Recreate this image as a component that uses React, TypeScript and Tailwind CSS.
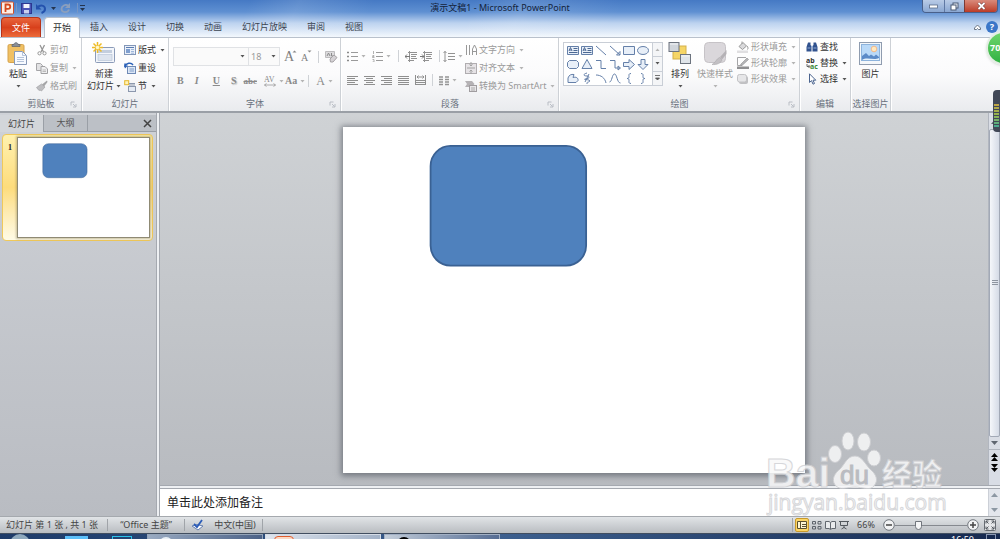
import { useState, type ReactNode } from "react";
import { clsx } from "clsx";

interface IconProps {
  w?: number;
  h?: number;
  children: ReactNode;
}

const Icon = ({ w = 12, h = 12, children }: IconProps) => (
  <svg
    width={w}
    height={h}
    viewBox={`0 0 ${w} ${h}`}
    fill="none"
    className="shrink-0"
    aria-hidden="true"
  >
    {children}
  </svg>
);

const Caret = ({ dim = false }: { dim?: boolean }) => (
  <Icon w={5} h={3}>
    <path d="M0.5 0H4.5L2.5 2.6Z" fill={dim ? "#b4b4b4" : "#555"} />
  </Icon>
);

const Divider = () => <span className="h-3 w-px shrink-0 bg-[#cfd2d6]" />;

// Ribbon building blocks
interface GroupProps {
  title: string;
  launcher?: boolean;
  className?: string;
  children: ReactNode;
}

const Group = ({ title, launcher, className, children }: GroupProps) => (
  <section
    className={clsx(
      "flex shrink-0 flex-col border-r border-[#cdd1d6] shadow-[1px_0_0_#fff]",
      className
    )}
  >
    <div className="flex h-[59px] items-start pt-1">{children}</div>
    <div className="flex h-[14px] items-center text-[#68707c]">
      <span className="flex-1 whitespace-nowrap text-center">{title}</span>
      {launcher && (
        <button aria-label={`${title}设置`} className="-ml-3 mr-1">
          <Icon w={7} h={7}>
            <path d="M1 4.500V1H4.500M3 3L5.500 5.500M6 3V6H3" stroke="#b3b8bf" strokeWidth=".9" />
          </Icon>
        </button>
      )}
    </div>
  </section>
);

interface SmallButtonProps {
  icon: ReactNode;
  label: string;
  arrow?: boolean;
  disabled?: boolean;
  tight?: boolean;
}

const SmallButton = ({ icon, label, arrow, disabled, tight }: SmallButtonProps) => (
  <button
    disabled={disabled}
    className={clsx(
      "flex items-center gap-0.5 whitespace-nowrap",
      tight ? "h-4" : "h-[18px]",
      disabled ? "text-[#9a9a9a]" : "text-[#333]"
    )}
  >
    {icon}
    <span>{label}</span>
    {arrow && (
      <span className="ml-0.5">
        <Caret dim={disabled} />
      </span>
    )}
  </button>
);

interface BigButtonProps {
  icon: ReactNode;
  label: string;
  second?: string;
  arrow?: boolean;
  disabled?: boolean;
  className?: string;
}

const BigButton = ({ icon, label, second, arrow, disabled, className }: BigButtonProps) => (
  <button
    disabled={disabled}
    className={clsx(
      "flex shrink-0 flex-col items-center whitespace-nowrap",
      disabled ? "text-[#9a9a9a]" : "text-[#333]",
      className
    )}
  >
    <span className="flex h-[26px] items-start">{icon}</span>
    <span>{label}</span>
    <span className="flex h-3 items-center gap-0.5">
      {second}
      {arrow && <Caret dim={disabled} />}
    </span>
  </button>
);

const IconButton = ({
  label,
  arrow,
  className,
  children,
}: {
  label: string;
  arrow?: boolean;
  className?: string;
  children: ReactNode;
}) => (
  <button
    aria-label={label}
    className={clsx("flex shrink-0 items-center gap-[3px] text-[#8a8a8a]", className)}
  >
    {children}
    {arrow && <Caret dim />}
  </button>
);

// Icons
const PasteIcon = () => (
  <Icon w={22} h={24}>
    <rect x="1" y="2.500" width="16" height="18" rx="1.500" fill="#f0c063" stroke="#d5a24c" />
    <path d="M5 4.500V2.500H7C7 0 11 0 11 2.500H13V4.500Z" fill="#8a8f98" stroke="#5d636d" strokeWidth=".7" />
    <path d="M7.500 9.500H15.500L19.500 13.500V22.500H7.500Z" fill="#f7faff" stroke="#8799b8" />
    <path d="M15.500 9.500V13.500H19.500M10 15.500H17M10 17.500H17M10 19.500H17" stroke="#b4c3da" />
  </Icon>
);

const CutIcon = () => (
  <Icon>
    <path d="M4 1L7.500 8M8.500 1L5 8" stroke="#969696" strokeWidth="1.300" />
    <circle cx="3.500" cy="9.300" r="1.600" stroke="#969696" />
    <circle cx="8.500" cy="9.300" r="1.600" stroke="#969696" />
  </Icon>
);

const CopyIcon = () => (
  <Icon>
    <path d="M.5 1.500H4.500L6.500 3.500V8.500H.5Z" fill="#e2e2e4" stroke="#a5a5a8" />
    <path d="M5 4.500H9L11.500 7V11.500H5Z" fill="#eeeef0" stroke="#a0a0a3" />
    <path d="M6.500 8H10M6.500 9.500H10" stroke="#bbb" />
  </Icon>
);

const BrushIcon = () => (
  <Icon>
    <path d="M11 .5L6 4.500L8 6.500L11.500 2Z" fill="#a5a5a7" />
    <path d="M5.500 4L9 7L5.500 11L4 10L3 10.500L.5 7.500Z" fill="#bdbdc0" stroke="#9a9a9d" strokeWidth=".6" />
  </Icon>
);

const NewSlideIcon = () => (
  <Icon w={24} h={24}>
    <rect x="3.500" y="5.500" width="19" height="15" rx="1" fill="#f3f6fb" stroke="#8b9bb8" />
    <rect x="6" y="8" width="14" height="3" fill="#c3cede" />
    <rect x="6" y="12.500" width="14" height="6" fill="#dde4ee" stroke="#b3c0d4" strokeWidth=".6" />
    <path d="M5.500 0V11M0 5.500H11M1.500 1.500L9.500 9.500M9.500 1.500L1.500 9.500" stroke="#eebb25" strokeWidth="1.500" />
    <circle cx="5.500" cy="5.500" r="1.800" fill="#fff7c8" />
  </Icon>
);

const LayoutIcon = () => (
  <Icon>
    <rect x=".5" y="1.500" width="11" height="9" fill="#eaf0f9" stroke="#8397b8" />
    <path d="M2 3.500H10" stroke="#5a7bb0" />
    <rect x="2" y="5" width="4" height="4" fill="#7f9fcf" />
    <path d="M7 5.500H10M7 7.500H10M7 9.200H10" stroke="#9db6da" />
  </Icon>
);

const ResetIcon = () => (
  <Icon>
    <rect x="3.500" y="4.500" width="8" height="7" fill="#dce7f6" stroke="#6f8ab5" />
    <path d="M5.500 7H10M5.500 9H10" stroke="#7f9cc8" />
    <path d="M1 5V1.500M1 4.500C2 1 7 0 9 3" stroke="#2c62b8" strokeWidth="1.500" />
    <path d="M0 3.500H4L1 6.500Z" fill="#2c62b8" />
  </Icon>
);

const SectionIcon = () => (
  <Icon>
    <rect x=".7" y=".7" width="4" height="4" fill="#fff3b8" stroke="#e6b72c" />
    <path d="M5 3.500H11M5 5H11" stroke="#8c98ad" />
    <rect x="4.500" y="6.500" width="7" height="5" fill="#e5ebf4" stroke="#8c98ad" />
  </Icon>
);

const BulletsIcon = ({ numbered = false }: { numbered?: boolean }) => (
  <Icon w={11} h={11}>
    <path d="M4 1.500H11M4 5.500H11M4 9.500H11" stroke="#9a9a9a" />
    {numbered ? (
      <path d="M1.500 0V3M.5 4.500H2V5.500H.5V6.500H2.500M.5 8.500H2V11H.5" stroke="#a0a0a0" strokeWidth=".8" />
    ) : (
      <path d="M0 1.500H2M0 5.500H2M0 9.500H2" stroke="#8a8a8a" strokeWidth="1.600" />
    )}
  </Icon>
);

const IndentIcon = ({ flip = false }: { flip?: boolean }) => (
  <Icon w={12} h={11}>
    <path d="M3 1.500H12M6 3.500H12M6 5.500H11M6 7.500H12M3 9.500H9M4.500 0V11" stroke="#929292" />
    <path
      d={flip ? "M0 5.500H4M2 3.500L4 5.500L2 7.500" : "M5 5.500H0M2 3.500L0 5.500L2 7.500"}
      stroke="#777"
    />
  </Icon>
);

const alignPaths: Record<string, string> = {
  左对齐: "M0 1.500H11M0 3.500H8M0 5.500H11M0 7.500H8M0 9.500H11",
  居中: "M0 1.500H11M2 3.500H9M0 5.500H11M2 7.500H9M0 9.500H11",
  右对齐: "M0 1.500H11M3 3.500H11M0 5.500H11M3 7.500H11M0 9.500H11",
  两端对齐: "M0 1.500H11M0 3.500H11M0 5.500H11M0 7.500H11M0 9.500H11",
  分散对齐: "M.5 0V4M10.500 0V4M2 2H9M0 5.500H11M0 7.500H11M0 9.500H11M3.500 .5L2 2L3.500 3.500M7.500 .5L9 2L7.500 3.500M.5 4V10M10.500 4V10",
};

const TextDirIcon = () => (
  <Icon>
    <path d="M1.500 1V11M4.500 1V11M7.500 11V5L9.500 1L11.500 5V11M7.500 7.500H11.500" stroke="#989898" />
  </Icon>
);

const AlignTextIcon = () => (
  <Icon>
    <rect x=".5" y="1.500" width="11" height="10" fill="#e6e3e6" stroke="#b0adb0" />
    <path d="M6 0V4M6 12V8M4.500 2.500L6 4L7.500 2.500M4.500 9.500L6 8L7.500 9.500M2 6H10" stroke="#a2a2a2" />
  </Icon>
);

const SmartArtIcon = () => (
  <Icon>
    <path d="M0 1H7L9.500 4L7 7H0L2 4Z" fill="#b5b2b5" />
    <rect x="4.500" y="5.500" width="7" height="6" fill="#e8e6e8" stroke="#a09da0" />
    <path d="M6 8H10M6 10H10" stroke="#aaa" />
  </Icon>
);

const ArrangeIcon = () => (
  <Icon w={24} h={23}>
    <rect x="5" y="4" width="13" height="13" fill="#f5d566" stroke="#d3b04a" />
    <rect x="1" y=".5" width="10" height="9" fill="#d0d5db" stroke="#6c737e" />
    <rect x="12.500" y="12.500" width="10" height="9" fill="#dfe4e9" stroke="#6c737e" />
    <path d="M2 2H10M13.500 14H21.500" stroke="#f4f6f8" />
  </Icon>
);

const QuickStyleIcon = () => (
  <Icon w={23} h={24}>
    <rect x=".5" y=".5" width="21" height="20" rx="4" fill="#dad7db" stroke="#c6c3c7" />
    <path d="M22.500 8L16 15L18 17.500L22.500 12Z" fill="#b5b2b6" />
    <path d="M15.500 15.500L18 18C17 21 13 23 8 22.500C12 20.500 12 17 15.500 15.500Z" fill="#c3c0c4" stroke="#aaa7ab" strokeWidth=".6" />
  </Icon>
);

const FillIcon = () => (
  <Icon>
    <path d="M2 5.500L6 1.500L9.500 5L5.500 8.500Z" fill="#d9d9db" stroke="#999" />
    <path d="M5 3V.5M10 5C11.500 6.500 11 8 10.500 8.500" stroke="#999" />
    <rect y="9.500" width="11" height="2.500" fill="#e0dfe1" />
  </Icon>
);

const OutlineIcon = () => (
  <Icon>
    <path d="M.5 .5H9M.5 .5V8.500H5" stroke="#a5a5a7" />
    <path d="M3.500 7.500L10 1L11.500 2.500L5 8.500Z" fill="#b5b5b8" stroke="#8d8d8f" strokeWidth=".6" />
    <rect y="9.500" width="12" height="2.500" fill="#8f8f91" />
  </Icon>
);

const EffectIcon = () => (
  <Icon>
    <rect x="2" y="3" width="9" height="8" rx="2" fill="#c0c0c3" />
    <rect x=".5" y="1.500" width="9" height="7.500" rx="2" fill="#e6e6e8" stroke="#c3c3c6" />
  </Icon>
);

const FindIcon = () => (
  <Icon>
    <path d="M2 1.500H4.500V4L5.500 5V10.500H.5V6ZM10 1.500H7.500V4L6.500 5V10.500H11.500V6Z" fill="#31528e" />
    <path d="M1.500 7H4.500M7.500 7H10.500M5 5.500H7" stroke="#8faad6" />
  </Icon>
);

const ReplaceIcon = () => (
  <Icon>
    <text x="0" y="5.500" fontSize="7" fontWeight="700" fill="#333">ab</text>
    <text x="4" y="11.500" fontSize="7" fontWeight="700" fill="#3b8a3b">ac</text>
    <path d="M1 7V9.500H3.500M2.500 8L4 9.500L2.500 11" stroke="#444" strokeWidth=".8" />
  </Icon>
);

const SelectIcon = () => (
  <Icon>
    <path d="M3.500 .8V9.500L5.500 7.600L7 11.200L8.500 10.500L7 7.200H9.800Z" fill="#fff" stroke="#4b648f" />
  </Icon>
);

const PictureIcon = () => (
  <Icon w={23} h={23}>
    <rect x=".5" y=".5" width="22" height="22" fill="#f4f7fa" stroke="#8f9caf" />
    <rect x="2.500" y="2.500" width="18" height="16" fill="#b9d9f8" stroke="#8db3dc" />
    <circle cx="15" cy="7" r="2.800" fill="#ffe9c0" stroke="#f2b98a" />
    <path d="M3 18V14L7 11L10 14L12 12.500L15 14.500L17 12.500L20 15V18Z" fill="#5c8bc8" />
    <path d="M3 18C8 14.500 15 19 20 16V18Z" fill="#e6f2fc" />
  </Icon>
);

// Shape gallery, in reading order
const shapes: { name: string; d: string; fill?: boolean; text?: boolean }[] = [
  { name: "文本框", d: "M1.500 3.500H12.500V11.500H1.500Z", fill: true, text: true },
  { name: "垂直文本框", d: "M1.500 3.500H12.500V11.500H1.500Z", fill: true, text: true },
  { name: "直线", d: "M2 3L12 12" },
  { name: "箭头", d: "M2 3L12 12M12 8.500V12H8.500Z" },
  { name: "矩形", d: "M1.500 3.500H12.500V11.500H1.500Z", fill: true },
  { name: "椭圆", d: "M1.500 7.500C1.500 2.200 12.500 2.200 12.500 7.500C12.500 12.800 1.500 12.800 1.500 7.500Z", fill: true },
  { name: "圆角矩形", d: "M3.500 3.500H10.500L12.500 5.500V9.500L10.500 11.500H3.500L1.500 9.500V5.500Z", fill: true },
  { name: "三角形", d: "M7 2.500L12 11.500H2Z", fill: true },
  { name: "肘形连接符", d: "M2 3.500H7V11.500H12" },
  { name: "肘形箭头", d: "M2 3.500H7V11H12M10 9L12.500 11L10 13Z" },
  { name: "右箭头", d: "M1.500 5.500H7V2.500L12.500 7.500L7 12.500V9.500H1.500Z", fill: true },
  { name: "下箭头", d: "M5 2.500H9V7.500H12L7 12.500L2 7.500H5Z", fill: true },
  { name: "任意多边形", d: "M2 11.500V7C3 4 5 3 8 3.500L7 6.500C10 5.500 12.500 7 12 9.500L10 11.500Z", fill: true },
  { name: "自由曲线", d: "M7 2C3 3 3 5 7 5C10 5 10 8 5 8C3 9 9 8 10 10C8 12 7 10 7 13M9 3L5 11" },
  { name: "弧形", d: "M2 4C7 4 11 7 12 12" },
  { name: "曲线", d: "M1.500 11C4 11 4 3 6.500 3C9 3 9 12 12.500 12" },
  { name: "左大括号", d: "M9 2.500C6.500 2.500 7 4 7 5.500C7 7 6.500 7.500 5 7.500C6.500 7.500 7 8 7 9.500C7 11 6.500 12.500 9 12.500" },
  { name: "右大括号", d: "M5 2.500C7.500 2.500 7 4 7 5.500C7 7 7.500 7.500 9 7.500C7.500 7.500 7 8 7 9.500C7 11 7.500 12.500 5 12.500" },
];

const TitleBar = () => (
  <header className="relative flex h-[17px] shrink-0 items-start justify-between">
    <div className="flex h-4 items-center gap-0.5 pl-px">
      <Icon w={13} h={14}>
        <rect x=".5" y="1" width="12" height="12" rx="1" fill="#fbeee6" stroke="#d1512a" />
        <path d="M4.500 11V3.500H7C10 3.500 10 7.800 7 7.800H4.500" stroke="#d6491d" strokeWidth="1.800" />
      </Icon>
      <span className="h-2.5 w-px bg-[#7796c4]" />
      <button aria-label="保存" className="ml-0.5">
        <Icon w={11} h={11}>
          <rect x=".5" y=".5" width="10" height="10" fill="#4a53b5" stroke="#2c3790" />
          <rect x="2.500" y="1" width="6" height="4" fill="#f2f4fb" />
          <rect x="3" y="7" width="5" height="3.500" fill="#c9d0ee" />
        </Icon>
      </button>
      <button aria-label="撤消" className="flex items-center gap-1 pl-0.5">
        <Icon w={11} h={11}>
          <path d="M1.500 4.500C4 1.500 9 2 9 6C9 8.500 7 9.500 5.500 10" stroke="#2452ad" strokeWidth="2" />
          <path d="M0 1V6.500H5.500Z" fill="#2452ad" />
        </Icon>
        <Icon w={5} h={3}>
          <path d="M0 0H5L2.500 3Z" fill="#24344f" />
        </Icon>
      </button>
      <button aria-label="恢复" className="pl-0.5">
        <Icon w={11} h={11}>
          <path d="M8.500 3C5.500 .5 1.500 3 1.500 6C1.500 9.500 7.500 10.500 9 6.500" stroke="#8b9fbd" strokeWidth="1.800" />
          <path d="M10 0V5H5Z" fill="#8b9fbd" />
        </Icon>
      </button>
      <span className="ml-1 h-2.5 w-px bg-[#7796c4]" />
      <button aria-label="自定义快速访问工具栏">
        <Icon w={5} h={6}>
          <path d="M0 .5H5" stroke="#24344f" />
          <path d="M0 3H5L2.500 6Z" fill="#24344f" />
        </Icon>
      </button>
    </div>
    <h1 className="absolute left-1/2 top-0.5 -translate-x-1/2 whitespace-nowrap text-[#14233b]">
      演示文稿1 - Microsoft PowerPoint
    </h1>
    <div className="mr-0.5 flex h-[13px] overflow-hidden rounded-b border border-t-0 border-[#49608a]">
      <button aria-label="最小化" className="flex w-[21px] items-center justify-center bg-linear-to-b from-[#b9cbe6] to-[#8aa7d2]">
        <Icon w={9} h={5}>
          <rect x=".5" y="1" width="8" height="3" fill="#fff" stroke="#5a6b88" strokeWidth=".8" />
        </Icon>
      </button>
      <button aria-label="还原" className="flex w-5 items-center justify-center border-l border-[#5f78a3] bg-linear-to-b from-[#b9cbe6] to-[#8aa7d2]">
        <Icon w={9} h={9}>
          <rect x="3" y="1" width="5" height="5" stroke="#4b5a75" fill="#eef2f8" />
          <rect x="1" y="3" width="5" height="5" stroke="#4b5a75" fill="#fff" />
        </Icon>
      </button>
      <button aria-label="关闭" className="flex w-[33px] items-center justify-center border-l border-[#7b3a35] bg-linear-to-b from-[#d98a7b] to-[#bb3a26]">
        <Icon w={9} h={8}>
          <path d="M1.500 1L7.500 7M7.500 1L1.500 7" stroke="#6a3a3a" strokeWidth="3" />
          <path d="M1.500 1L7.500 7M7.500 1L1.500 7" stroke="#fff" strokeWidth="1.800" />
        </Icon>
      </button>
    </div>
  </header>
);

const tabs = ["开始", "插入", "设计", "切换", "动画", "幻灯片放映", "审阅", "视图"];

const TabRow = () => {
  const [active, setActive] = useState("开始");
  return (
    <nav className="flex h-[21px] shrink-0 items-end border-b border-[#b9c1cc] pl-px">
      <button className="mr-[3px] h-5 w-10 rounded-t-sm border border-b-0 border-[#b5331a] bg-linear-to-b from-[#e8643b] via-[#d8401b] to-[#ec6b3a] text-white">
        文件
      </button>
      {tabs.map((tab) => (
        <button
          key={tab}
          onClick={() => setActive(tab)}
          className={clsx(
            "h-5 whitespace-nowrap",
            tab === active
              ? "-mb-px h-[21px] rounded-t-sm border border-b-0 border-[#b9c1cc] bg-white px-2 text-[#333]"
              : "px-2.5 text-[#3b4450]"
          )}
        >
          {tab}
        </button>
      ))}
      <div className="ml-auto flex h-5 items-center gap-1 pr-0.5">
        <button aria-label="功能区最小化">
          <Icon w={9} h={7}>
            <path d="M1.500 4L4.500 1L7.500 4V5.500H5.500L4.500 4.500L3.500 5.500H1.500Z" fill="#fff" stroke="#5c6675" strokeWidth=".9" />
          </Icon>
        </button>
        <button aria-label="帮助" className="flex size-3 items-center justify-center rounded-full bg-[#3a76c8] font-bold text-white">
          ?
        </button>
      </div>
    </nav>
  );
};

const FontGroup = () => (
  <Group title="字体" launcher className="w-[172px]">
    <div className="flex w-full flex-col pl-1">
      <div className="mt-[5px] flex h-[19px] items-center">
        <div className="relative flex items-center">
          <select
            aria-label="字体名称"
            className="h-[19px] w-[76px] appearance-none border border-[#e0e2e5] bg-[#fafafa]"
          />
          <span className="pointer-events-none absolute right-1">
            <Caret />
          </span>
        </div>
        <div className="relative flex items-center">
          <select
            aria-label="字号"
            className="h-[19px] w-[31px] appearance-none border border-l-0 border-[#e0e2e5] bg-[#fafafa] pl-0.5 text-[#999]"
          >
            <option>18</option>
          </select>
          <span className="pointer-events-none absolute right-1">
            <Caret />
          </span>
        </div>
        <IconButton label="增大字号" className="ml-1">
          <Icon w={13} h={13}>
            <text x="0" y="11" fontSize="14" fontFamily="'Liberation Serif', serif" fill="#7f7f7f">A</text>
            <path d="M8.500 2.500H12.500L10.500 .5Z" fill="#8a8a8a" />
          </Icon>
        </IconButton>
        <IconButton label="减小字号" className="ml-1">
          <Icon w={11} h={13}>
            <text x="0" y="11" fontSize="10" fontFamily="'Liberation Serif', serif" fill="#7f7f7f">A</text>
            <path d="M6.500 .5H10.500L8.500 2.500Z" fill="#8a8a8a" />
          </Icon>
        </IconButton>
        <span className="ml-1.5 flex">
          <Divider />
        </span>
        <IconButton label="清除格式" className="ml-1.5">
          <Icon w={13} h={13}>
            <path d="M.5 1.500H9.500V7.500H.5Z" fill="#dddcde" stroke="#bdbcbe" />
            <path d="M2 6L3.500 3L5 6M6.500 3V6H8" stroke="#8a8a8a" />
            <path d="M5 9L9 5L12 7.500L8 12H5.500Z" fill="#d5d2d5" stroke="#a5a2a5" />
          </Icon>
        </IconButton>
      </div>
      <div className="mt-2 flex h-[14px] items-center gap-[11px] pl-1 font-['Liberation_Serif',serif] text-[10px]">
        <IconButton label="加粗"><b>B</b></IconButton>
        <IconButton label="倾斜" className="w-[7px]"><i className="font-bold">I</i></IconButton>
        <IconButton label="下划线"><span className="font-bold underline">U</span></IconButton>
        <IconButton label="文字阴影"><b className="[text-shadow:1px_1px_1px_#bbb]">S</b></IconButton>
        <IconButton label="删除线" className="-mr-1 -ml-1"><span className="text-[9px] font-bold line-through">abc</span></IconButton>
        <IconButton label="字符间距" arrow className="-mr-1">
          <Icon w={12} h={12}>
            <text x="0" y="7" fontSize="8" fill="#8a8a8a">AV</text>
            <path d="M.5 10H11.500M2.500 8.500L.5 10L2.500 11.500M9.500 8.500L11.500 10L9.500 11.500" stroke="#999" strokeWidth=".8" />
          </Icon>
        </IconButton>
        <IconButton label="更改大小写" arrow className="-mr-2 -ml-1.5">
          <span className="font-bold">Aa</span>
        </IconButton>
        <Divider />
        <IconButton label="字体颜色" arrow className="-ml-1">
          <span className="text-[12px]">A</span>
        </IconButton>
      </div>
    </div>
  </Group>
);

const ParagraphGroup = () => (
  <Group title="段落" launcher className="w-[218px]">
    <div className="flex w-[124px] shrink-0 flex-col pl-1.5">
      <div className="mt-2 flex h-3 items-center gap-[7px]">
        <IconButton label="项目符号" arrow><BulletsIcon /></IconButton>
        <IconButton label="编号" arrow className="-ml-px"><BulletsIcon numbered /></IconButton>
        <Divider />
        <IconButton label="减少缩进" className="-ml-px"><IndentIcon /></IconButton>
        <IconButton label="增加缩进" className="-ml-1"><IndentIcon flip /></IconButton>
        <Divider />
        <IconButton label="行距" arrow className="-ml-1">
          <Icon w={12} h={11}>
            <path d="M2 0V11M.5 2L2 .5L3.500 2M.5 9L2 10.500L3.500 9M5 2.500H12M5 5.500H12M5 8.500H12" stroke="#929292" />
          </Icon>
        </IconButton>
      </div>
      <div className="mt-3 flex h-3 items-center gap-1.5">
        {Object.entries(alignPaths).map(([name, d]) => (
          <IconButton key={name} label={name}>
            <Icon w={11} h={11}>
              <path d={d} stroke="#8f8f8f" />
            </Icon>
          </IconButton>
        ))}
        <Divider />
        <IconButton label="分栏" arrow>
          <Icon w={10} h={11}>
            <path d="M0 2H4M0 4.500H4M0 7H4M0 9.500H4M6 2H10M6 4.500H10M6 7H10M6 9.500H10" stroke="#949494" strokeWidth="1.600" />
          </Icon>
        </IconButton>
      </div>
    </div>
    <div className="-mt-1 flex flex-col pt-[3px]">
      <SmallButton icon={<TextDirIcon />} label="文字方向" arrow disabled />
      <SmallButton icon={<AlignTextIcon />} label="对齐文本" arrow disabled />
      <SmallButton icon={<SmartArtIcon />} label="转换为 SmartArt" arrow disabled />
    </div>
  </Group>
);

const DrawingGroup = () => (
  <Group title="绘图" launcher className="w-[241px]">
    <div className="ml-1 flex shrink-0 border border-[#c9ced6] bg-white">
      <div className="grid grid-cols-6 px-0.5">
        {shapes.map((shape) => (
          <button key={shape.name} aria-label={shape.name}>
            <Icon w={14} h={14}>
              <path d={shape.d} stroke="#6580a9" fill={shape.fill ? "#e8eff8" : "none"} />
              {shape.text && (
                <path d="M3 8L4.500 4.500L6 8M3.500 7H5.500M7.500 5.500H11.500M7.500 7.500H11.500M3 9.500H11.500" stroke="#4c6893" />
              )}
            </Icon>
          </button>
        ))}
      </div>
      <div className="flex w-[10px] flex-col divide-y divide-[#c9ced6] border-l border-[#c9ced6] bg-[#f4f5f7]">
        <button aria-label="向上" className="flex flex-1 items-center justify-center">
          <Icon w={5} h={3}>
            <path d="M.5 3H4.500L2.500 .4Z" fill="#b4b4b4" />
          </Icon>
        </button>
        <button aria-label="向下" className="flex flex-1 items-center justify-center"><Caret /></button>
        <button aria-label="其他" className="flex flex-1 items-center justify-center">
          <Icon w={5} h={6}>
            <path d="M0 .5H5M.5 3H4.500L2.500 5Z" stroke="#555" fill="#555" strokeWidth=".8" />
          </Icon>
        </button>
      </div>
    </div>
    <BigButton icon={<ArrangeIcon />} label="排列" arrow className="ml-[3px] w-7" />
    <BigButton icon={<QuickStyleIcon />} label="快速样式" arrow disabled className="ml-0.5 w-[38px]" />
    <div className="-mt-1 ml-[3px] flex flex-col pt-px">
      <SmallButton icon={<FillIcon />} label="形状填充" arrow disabled tight />
      <SmallButton icon={<OutlineIcon />} label="形状轮廓" arrow disabled tight />
      <SmallButton icon={<EffectIcon />} label="形状效果" arrow disabled tight />
    </div>
  </Group>
);

const Ribbon = () => (
  <div className="flex h-[75px] shrink-0 border-b-2 border-[#9a9fa6] bg-linear-to-b from-white via-[#fbfbfc] to-[#e9ebee]">
    <Group title="剪贴板" launcher className="w-[82px]">
      <BigButton icon={<PasteIcon />} label="粘贴" arrow className="ml-1 w-7" />
      <div className="-mt-1 ml-1 flex flex-col pt-[3px]">
        <SmallButton icon={<CutIcon />} label="剪切" disabled />
        <SmallButton icon={<CopyIcon />} label="复制" arrow disabled />
        <SmallButton icon={<BrushIcon />} label="格式刷" disabled />
      </div>
    </Group>
    <Group title="幻灯片" className="w-[87px]">
      <BigButton icon={<NewSlideIcon />} label="新建" second="幻灯片" arrow className="ml-1 w-[36px]" />
      <div className="-mt-1 ml-0.5 flex flex-col pt-[3px]">
        <SmallButton icon={<LayoutIcon />} label="版式" arrow />
        <SmallButton icon={<ResetIcon />} label="重设" />
        <SmallButton icon={<SectionIcon />} label="节" arrow />
      </div>
    </Group>
    <FontGroup />
    <ParagraphGroup />
    <DrawingGroup />
    <Group title="编辑" className="w-[51px]">
      <div className="-mt-1 ml-1.5 flex flex-col pt-px">
        <SmallButton icon={<FindIcon />} label="查找" tight />
        <SmallButton icon={<ReplaceIcon />} label="替换" arrow tight />
        <SmallButton icon={<SelectIcon />} label="选择" arrow tight />
      </div>
    </Group>
    <Group title="选择图片" className="w-10">
      <BigButton icon={<PictureIcon />} label="图片" className="w-full" />
    </Group>
  </div>
);

const Slide = () => (
  <svg viewBox="0 0 462 347" className="block size-full bg-white" role="img" aria-label="幻灯片 1">
    <rect x="87.500" y="19" width="156" height="120" rx="20" fill="#4f81bd" stroke="#3a6193" strokeWidth="1.800" />
  </svg>
);

const SlidePanel = () => (
  <aside className="flex w-[156px] shrink-0 flex-col bg-linear-to-b from-[#cfd2d7] to-[#b9bcc2] pt-0.5">
    <div className="flex h-[17px] shrink-0 items-stretch bg-[#bcc0c6]">
      <button className="w-11 border-r border-[#9a9fa6] bg-[#d3d6da] text-[#444]">幻灯片</button>
      <button className="w-11 border-b border-r border-[#9a9fa6] text-[#555]">大纲</button>
      <div className="flex flex-1 items-center justify-end border-b border-[#9a9fa6] pr-1">
        <button aria-label="关闭窗格">
          <Icon w={9} h={9}>
            <path d="M1 1L8 8M8 1L1 8" stroke="#444" strokeWidth="1.500" />
          </Icon>
        </button>
      </div>
    </div>
    <button className="ml-0.5 mr-[3px] mt-0.5 flex h-[107px] shrink-0 items-start rounded-sm border border-[#f0c95a] bg-linear-to-b from-[#fff1ae] via-[#fddc7c] to-[#fffbe6] py-0.5 pr-0.5">
      <span className="w-[14px] pt-1 font-['Liberation_Serif',serif] font-bold text-[#333]">1</span>
      <span className="block h-[101px] flex-1 border border-[#8f8a74] shadow-[0_0_2px_1px_rgba(110,100,60,0.4)]">
        <Slide />
      </span>
    </button>
  </aside>
);

const Arrow = ({ up = false, color = "#5f6670" }: { up?: boolean; color?: string }) => (
  <Icon w={7} h={4}>
    <path d={up ? "M0 4H7L3.500 0Z" : "M0 0H7L3.500 4Z"} fill={color} />
  </Icon>
);

const SlideScrollbar = () => (
  <div className="flex w-3 shrink-0 flex-col border-l border-[#b1b6bf] bg-[#d9dde5] pt-0.5">
    <button aria-label="向上滚动" className="flex h-3.5 items-center justify-center"><Arrow up /></button>
    <div className="flex flex-1 items-center justify-center rounded-xs border border-[#a2a9b6] bg-linear-to-r from-[#f5f7fa] to-[#d5dbe6]">
      <Icon w={6} h={6}>
        <path d="M0 .5H6M0 2.500H6M0 4.500H6" stroke="#8e95a0" />
      </Icon>
    </div>
    <button aria-label="向下滚动" className="flex h-3 items-center justify-center"><Arrow /></button>
    <button aria-label="上一张幻灯片" className="flex h-3.5 flex-col items-center justify-center border-t border-[#b1b6bf]">
      <Arrow up color="#000" />
      <Arrow up color="#000" />
    </button>
    <button aria-label="下一张幻灯片" className="mb-3 flex h-2.5 flex-col items-center justify-center">
      <Arrow color="#000" />
      <Arrow color="#000" />
    </button>
  </div>
);

const Workspace = () => (
  <main className="flex min-h-0 flex-1">
    <SlidePanel />
    <div className="w-1 shrink-0 border-x border-[#a5a9b0] bg-[#eef0f3]" />
    <div className="flex min-w-0 flex-1 flex-col">
      <div className="flex min-h-0 flex-1">
        <div className="flex min-w-0 flex-1 items-center justify-center bg-linear-to-b from-[#cfd2d5] to-[#b8bbc0] pb-3 pt-3.5">
          <div className="aspect-[4/3] h-full shadow-[0_1px_6px_2px_rgba(70,75,85,0.6)]">
            <Slide />
          </div>
        </div>
        <SlideScrollbar />
      </div>
      <div className="h-1 shrink-0 border-y border-[#a5a9b0] bg-[#eef0f3]" />
      <div className="flex h-[27px] shrink-0 bg-white">
        <textarea
          aria-label="备注"
          placeholder="单击此处添加备注"
          className="h-full min-w-0 flex-1 resize-none overflow-hidden pl-[7px] pt-1.5 text-[12px] leading-4 placeholder:text-[#222] placeholder:opacity-100"
        />
        <div className="flex w-3 flex-col items-center justify-between border-l border-[#ccd0d7] bg-[#e3e6ec] py-1">
          <Arrow up color="#8d98a3" />
          <Arrow color="#8d98a3" />
        </div>
      </div>
    </div>
  </main>
);

const StatusBar = () => {
  const [zoom, setZoom] = useState(31);
  return (
    <footer className="flex h-[17px] shrink-0 items-center border-t border-[#a5a9ae] bg-linear-to-b from-[#e1e4e7] to-[#b9bdc1] text-[#444]">
      <span className="w-[108px] whitespace-nowrap border-r border-[#a0a4a9] pl-1.5">幻灯片 第 1 张 , 共 1 张</span>
      <span className="w-[77px] whitespace-nowrap border-r border-[#a0a4a9] text-center">“Office 主题”</span>
      <button aria-label="拼写检查" className="ml-1.5">
        <Icon w={13} h={12}>
          <path d="M1 7L6 5.500L12 7L7 11Z" fill="#fff" stroke="#6680b0" />
          <path d="M3 5L6 8L11 1" stroke="#2b5cb8" strokeWidth="1.800" />
        </Icon>
      </button>
      <button className="w-[59px] border-r border-[#a0a4a9] whitespace-nowrap pl-1">中文(中国)</button>
      <div className="ml-auto flex items-center gap-[3px] border-l border-[#a0a4a9] pl-0.5 pr-1">
        <button aria-label="普通视图" className="rounded-xs border border-[#c99a2c] bg-[#fcd667] p-px">
          <Icon w={10} h={10}>
            <path d="M.5 1.500H9.500V8.500H.5ZM3.500 1.500V8.500M5 4.500H9M5 6.500H9" stroke="#5b512f" fill="#fff6d2" />
          </Icon>
        </button>
        <button aria-label="幻灯片浏览">
          <Icon w={10} h={10}>
            <path d="M.5 1.500H3.500V4H.5ZM6 1.500H9V4H6ZM.5 6.500H3.500V9H.5ZM6 6.500H9V9H6Z" stroke="#5e646c" />
          </Icon>
        </button>
        <button aria-label="阅读视图">
          <Icon w={11} h={10}>
            <path d="M5.500 2.500L4 1.500H.5V8.500H4L5.500 9.500L7 8.500H10.500V1.500H7ZM5.500 2.500V9" stroke="#62686f" fill="#e9ebed" />
          </Icon>
        </button>
        <button aria-label="幻灯片放映">
          <Icon w={10} h={10}>
            <path d="M0 1.500H10M1.500 1.500V5.500H8.500V1.500M5 5.500V8M2.500 9L5 7.500L7.500 9" stroke="#53595f" />
          </Icon>
        </button>
        <button className="ml-0.5 w-6 text-center">66%</button>
        <button aria-label="缩小" className="ml-0.5">
          <Icon w={12} h={12}>
            <circle cx="6" cy="6" r="5.300" fill="#f2f3f4" stroke="#70757c" />
            <path d="M3 6H9" stroke="#444" strokeWidth="1.500" />
          </Icon>
        </button>
        <input
          type="range"
          aria-label="显示比例"
          value={zoom}
          onChange={(e) => setZoom(Number(e.target.value))}
          className="-mx-[3px] h-3 w-[72px] appearance-none bg-transparent [&::-webkit-slider-runnable-track]:h-px [&::-webkit-slider-runnable-track]:bg-[#85898f] [&::-webkit-slider-thumb]:-mt-1 [&::-webkit-slider-thumb]:h-[9px] [&::-webkit-slider-thumb]:w-[7px] [&::-webkit-slider-thumb]:appearance-none [&::-webkit-slider-thumb]:rounded-b-full [&::-webkit-slider-thumb]:border [&::-webkit-slider-thumb]:border-[#70757c] [&::-webkit-slider-thumb]:bg-[#f4f5f6]"
        />
        <button aria-label="放大">
          <Icon w={12} h={12}>
            <circle cx="6" cy="6" r="5.300" fill="#f2f3f4" stroke="#70757c" />
            <path d="M3 6H9M6 3V9" stroke="#444" strokeWidth="1.500" />
          </Icon>
        </button>
        <button aria-label="适应窗口" className="ml-0.5">
          <Icon w={12} h={12}>
            <rect x=".5" y=".5" width="11" height="11" rx="1" fill="#e5e7e9" stroke="#666b71" />
            <path d="M2 4.500V2H4.500M7.500 2H10V4.500M10 7.500V10H7.500M4.500 10H2V7.500M2 2L4.500 4.500M10 2L7.500 4.500M10 10L7.500 7.500M2 10L4.500 7.500" stroke="#555a60" />
          </Icon>
        </button>
      </div>
    </footer>
  );
};

const Taskbar = () => (
  <div className="flex h-1.5 shrink-0 items-start overflow-hidden border-t border-[#414e60] bg-linear-to-r from-[#1d3a68] via-[#3d608f] to-[#16294f]">
    <span className="ml-2.5 h-5 w-5 shrink-0 rounded-full bg-[#8fa9bd]" />
    <span className="ml-[35px] mt-0.5 h-4 w-[23px] bg-[#5cc0fa]" />
    <span className="ml-6 mt-0.5 h-4 w-5 border border-[#2bc3ea]" />
    <button aria-label="浏览器" className="ml-[15px] h-5 w-[116px] border border-[#94a4b8] bg-linear-to-r from-[#9aabc2] to-[#4c6287] pl-[11px]">
      <span className="block size-3.5 rounded-full bg-[#e9f0f6]" />
    </button>
    <button aria-label="PowerPoint" className="ml-0.5 h-5 w-[116px] border border-[#d5dce6] bg-linear-to-r from-[#dde4ed] to-[#a3b2c7] pl-2">
      <span className="block h-4 w-5 rounded-sm border border-[#df5d2e] bg-[#fbd9c5]" />
    </button>
    <button aria-label="QQ" className="ml-[3px] h-5 w-[116px] border border-[#a2b0c4] bg-linear-to-r from-[#c4ceda] to-[#566d93] pl-3">
      <span className="block size-3.5 rounded-full bg-black" />
    </button>
    <span className="ml-auto mr-1 flex gap-3 text-white">
      16:50
      <span className="h-4 w-[10px] border border-[#8b98b2]" />
    </span>
  </div>
);

const Watermark = () => (
  <svg
    width="186"
    height="90"
    viewBox="0 0 186 90"
    className="pointer-events-none absolute bottom-[21px] right-12 opacity-85"
    fontFamily="'Liberation Sans', 'Noto Sans CJK SC', sans-serif"
    fill="#f8f8f9"
    stroke="#d0d1d4"
    strokeWidth="1"
    aria-label="Baidu经验"
  >
    <text x="0" y="59" fontSize="41" fontWeight="700">Bai</text>
    <ellipse cx="69" cy="26" rx="6.500" ry="8.500" />
    <ellipse cx="82" cy="13" rx="6" ry="9" />
    <ellipse cx="98" cy="14" rx="6.500" ry="9" />
    <ellipse cx="108" cy="30" rx="6.500" ry="8" />
    <path d="M89 28C96 28 99 36 104 41C110 46 113 52 108 58C104 63 96 59 89 59C81 59 74 63 69 57C65 51 69 45 74 41C79 36 81 28 89 28Z" />
    <text x="74" y="56" fontSize="26" fill="#bbbdc2" stroke="#bbbdc2">du</text>
    <text x="116" y="57" fontSize="30" fontWeight="700">经验</text>
    <text x="2" y="82" fontSize="21" fontFamily="'Open Sans', sans-serif">jingyan.baidu.com</text>
  </svg>
);

export default function App() {
  return (
    <div className="relative flex h-screen flex-col overflow-hidden bg-[linear-gradient(115deg,transparent_20%,rgba(255,255,255,0.12)_24%,transparent_30%,transparent_38%,rgba(255,255,255,0.12)_42%,transparent_50%),linear-gradient(to_bottom,#4579c4_0,#5f90d2_12px,#bcd2ef_23px,#f3f8fd_37px)] font-['Noto_Sans','Noto_Sans_CJK_SC',sans-serif] text-[9px] leading-3">
      <TitleBar />
      <TabRow />
      <Ribbon />
      <Workspace />
      <StatusBar />
      <Taskbar />
      <Watermark />
      <div className="absolute -right-5 top-[31px] flex size-[34px] items-center rounded-full border-2 border-[#e3eee3] bg-linear-to-b from-[#6cd66c] to-[#2fb142] pl-0.5 font-bold text-white shadow">
        70
      </div>
      <div className="absolute right-0 top-[90px] h-[42px] w-[7px] rounded-l-sm bg-[#414857] px-px py-3.5">
        <div className="h-6 bg-[repeating-linear-gradient(to_bottom,transparent_0_2px,#414857_2px_3px),linear-gradient(to_bottom,#c2a445,#8fb54e,#3ba69a)]" />
      </div>
    </div>
  );
}
